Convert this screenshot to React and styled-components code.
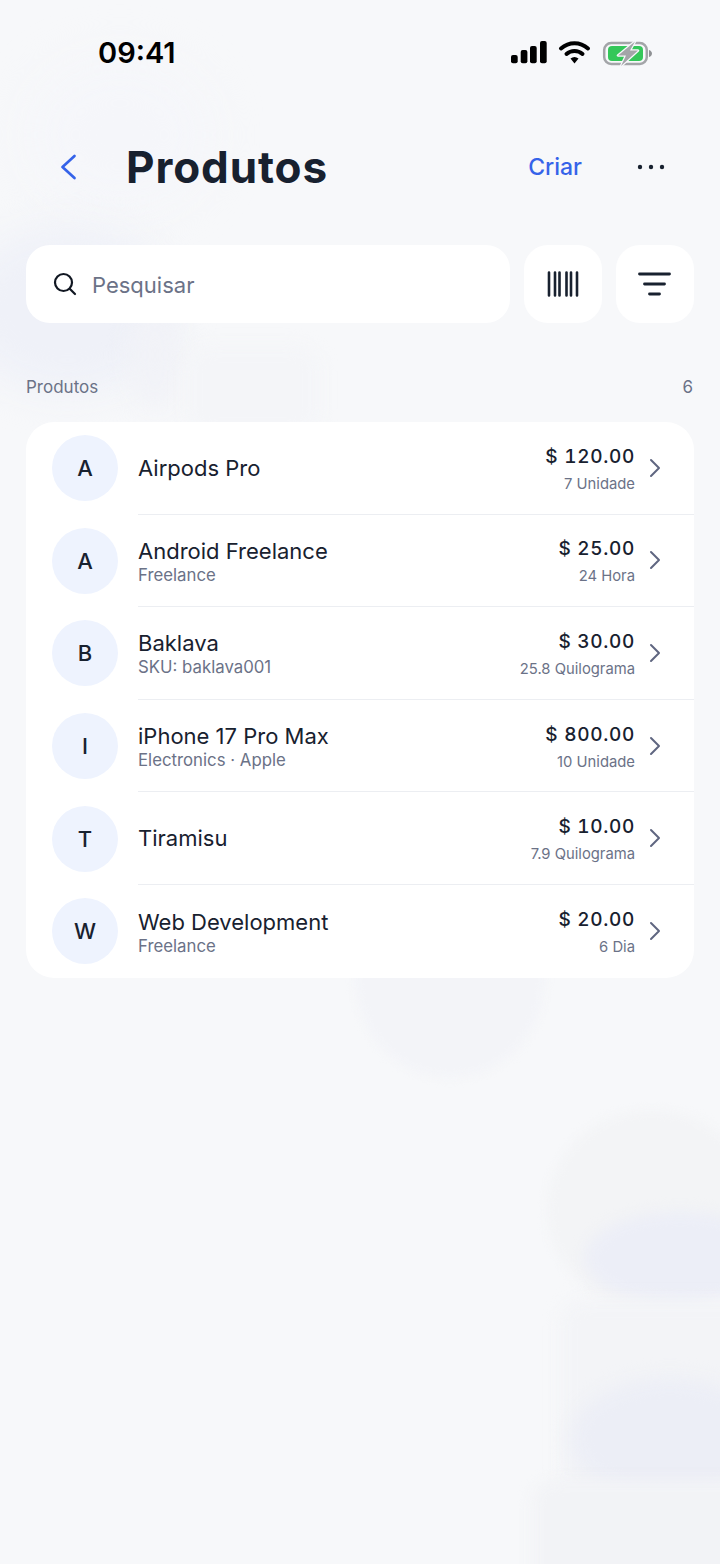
import React from 'react';
import styled, { createGlobalStyle } from 'styled-components';

const GlobalStyle = createGlobalStyle`
  html, body {
    margin: 0;
    padding: 0;
    background: #f7f8fa;
    font-family: Inter, "Noto Sans", sans-serif;
  }
`;

const Screen = styled.div`
  position: relative;
  width: 720px;
  height: 1564px;
  overflow: hidden;
  background: #f7f8fa;
`;

const Blob = styled.div`
  position: absolute;
  left: ${({ x }) => x}px;
  top: ${({ y }) => y}px;
  width: ${({ w }) => w}px;
  height: ${({ h }) => h}px;
  border-radius: ${({ square }) => (square ? '24px' : '50%')};
  background: ${({ color }) => color};
  filter: blur(${({ blur }) => blur}px);
`;

const Content = styled.div`
  position: relative;
  display: flex;
  flex-direction: column;
`;

const StatusBar = styled.div`
  height: 104px;
  padding: 0 66px 0 98px;
  box-sizing: border-box;
  display: flex;
  justify-content: space-between;
  align-items: flex-start;
`;

const Time = styled.div`
  margin-top: 35px;
  font-size: 29px;
  line-height: 36px;
  font-weight: 600;
  color: #000;
`;

const StatusIcons = styled.svg`
  margin-top: 38px;
`;

const Header = styled.div`
  height: 126px;
  padding: 0 55px 0 59px;
  display: flex;
  align-items: center;
`;

const BackButton = styled.svg`
  flex: none;
  margin-right: 49px;
`;

const Title = styled.h1`
  flex: 1;
  margin: 0;
  font-size: 44px;
  line-height: 50px;
  font-weight: 700;
  letter-spacing: 0.9px;
  color: #18212f;
`;

const CreateLink = styled.span`
  margin-right: 55px;
  font-size: 23px;
  font-weight: 500;
  color: #3563e9;
`;

const SearchRow = styled.div`
  margin-top: 15px;
  padding: 0 26px;
  display: flex;
  gap: 13.5px;
`;

const SearchBox = styled.div`
  flex: 1;
  height: 78px;
  padding-left: 27px;
  display: flex;
  align-items: center;
  gap: 15px;
  background: #fff;
  border-radius: 24px;
`;

const SearchText = styled.span`
  padding-top: 2px;
  font-size: 22px;
  color: #6b7287;
`;

const IconButton = styled.div`
  width: 78.5px;
  height: 78px;
  display: flex;
  align-items: center;
  justify-content: center;
  background: #fff;
  border-radius: 24px;
`;

const SectionRow = styled.div`
  margin-top: 53px;
  padding: 0 27px 0 26px;
  display: flex;
  justify-content: space-between;
  align-items: center;
  height: 22px;
  font-size: 17px;
  color: #6b7287;
`;

const ListCard = styled.div`
  margin: 24px 26px 0;
  background: #fff;
  border-radius: 28px;
  overflow: hidden;
`;

const Row = styled.div`
  height: 92.6px;
  padding-left: 26px;
  display: flex;
  align-items: center;
`;

const Avatar = styled.div`
  flex: none;
  width: 66px;
  height: 66px;
  margin-right: 20px;
  border-radius: 50%;
  display: flex;
  align-items: center;
  justify-content: center;
  background: #eef3fe;
  font-size: 22px;
  font-weight: 500;
  color: #18212f;
`;

const RowBody = styled.div`
  flex: 1;
  align-self: stretch;
  padding-right: 33px;
  display: flex;
  align-items: center;
  border-bottom: ${({ last }) => (last ? 'none' : '1.5px solid #eceef2')};
`;

const Info = styled.div`
  flex: 1;
`;

const Name = styled.div`
  font-size: 22px;
  line-height: 26px;
  color: #18212f;
`;

const Sub = styled.div`
  margin: 1px 0 -2px;
  font-size: 16.8px;
  line-height: 20px;
  color: #6b7287;
`;

const PriceCol = styled.div`
  margin-right: 14px;
  padding-top: 2px;
  text-align: right;
`;

const Price = styled.div`
  font-size: 19px;
  line-height: 26px;
  font-weight: 500;
  font-variant-numeric: tabular-nums;
  letter-spacing: 0.7px;
  color: #18212f;
`;

const Qty = styled.div`
  margin-top: 4px;
  font-size: 14.8px;
  line-height: 20px;
  color: #6b7287;
`;

const products = [
  { letter: 'A', name: 'Airpods Pro', price: '$ 120.00', qty: '7 Unidade' },
  { letter: 'A', name: 'Android Freelance', sub: 'Freelance', price: '$ 25.00', qty: '24 Hora' },
  { letter: 'B', name: 'Baklava', sub: 'SKU: baklava001', price: '$ 30.00', qty: '25.8 Quilograma' },
  { letter: 'I', name: 'iPhone 17 Pro Max', sub: 'Electronics · Apple', price: '$ 800.00', qty: '10 Unidade' },
  { letter: 'T', name: 'Tiramisu', price: '$ 10.00', qty: '7.9 Quilograma' },
  { letter: 'W', name: 'Web Development', sub: 'Freelance', price: '$ 20.00', qty: '6 Dia' },
];

// soft background shapes behind the page
const blobs = [
  { x: 30, y: 60, w: 180, h: 150, blur: 24, color: '#f5f6fa' },
  { x: -40, y: 225, w: 215, h: 170, blur: 18, color: '#eff1f8' },
  { x: 130, y: 300, w: 50, h: 110, blur: 12, color: '#f1f2f7' },
  { x: 185, y: 345, w: 135, h: 90, blur: 8, square: true, color: '#f4f5f8' },
  { x: 355, y: 880, w: 190, h: 198, blur: 4, color: '#f3f4f8' },
  { x: 547, y: 1110, w: 210, h: 200, blur: 5, color: '#f3f4f6' },
  { x: 585, y: 1212, w: 190, h: 92, blur: 7, color: '#eceef7' },
  { x: 560, y: 1300, w: 200, h: 200, blur: 8, square: true, color: '#f3f4f7' },
  { x: 570, y: 1378, w: 200, h: 122, blur: 9, color: '#eceef6' },
  { x: 532, y: 1480, w: 230, h: 120, blur: 7, square: true, color: '#f2f3f6' },
];

const Chevron = () => (
  <svg width="12" height="20" viewBox="0 0 12 20" fill="none">
    <path d="M2 2l8 8-8 8" stroke="#5f6680" strokeWidth="2" strokeLinecap="round" strokeLinejoin="round" />
  </svg>
);

export default function App() {
  return (
    <Screen>
      <GlobalStyle />
      {blobs.map((b, i) => (
        <Blob key={i} {...b} />
      ))}
      <Content>
        <StatusBar>
          <Time>09:41</Time>
          <StatusIcons width="144" height="28" viewBox="0 0 144 28">
            <rect x="1" y="17" width="6.700" height="8.300" rx="2" fill="#000" />
            <rect x="10.700" y="12" width="6.700" height="13.300" rx="2" fill="#000" />
            <rect x="20" y="8" width="6.700" height="17.300" rx="2" fill="#000" />
            <rect x="30" y="3" width="6.700" height="22.300" rx="2" fill="#000" />
            <path d="M51 10.500C59 3.500 70 3.500 78 10.500" stroke="#000" strokeWidth="4" fill="none" strokeLinecap="round" />
            <path d="M56.500 16C61 12 68 12 72.500 16" stroke="#000" strokeWidth="4" fill="none" strokeLinecap="round" />
            <path d="M60.500 20.500L64.500 25.500L68.500 20.500C66 18.500 63 18.500 60.500 20.500z" fill="#000" />
            <rect x="94.200" y="5" width="42.600" height="21" rx="7" fill="none" stroke="#a3a5a8" strokeWidth="2.500" />
            <rect x="98" y="8" width="35" height="15" rx="4" fill="#34c759" />
            <path d="M139 12v7c1.800-.5 3-2 3-3.500s-1.200-3-3-3.500z" fill="#8f9194" />
            <path d="M125 3.500L108 17.500H116L111 28L128 12.500H120z" fill="#a3a5a8" stroke="#f7f8fa" strokeWidth="2.500" strokeLinejoin="round" paintOrder="stroke" />
          </StatusIcons>
        </StatusBar>

        <Header>
          <BackButton width="18" height="28" viewBox="0 0 18 28" fill="none">
            <path d="M15.500 3L3.500 14l12 11" stroke="#3563e9" strokeWidth="2.700" strokeLinecap="round" strokeLinejoin="round" />
          </BackButton>
          <Title>Produtos</Title>
          <CreateLink>Criar</CreateLink>
          <svg width="28" height="6" viewBox="0 0 28 6">
            <circle cx="3" cy="3" r="2.200" fill="#18212f" />
            <circle cx="14" cy="3" r="2.200" fill="#18212f" />
            <circle cx="25" cy="3" r="2.200" fill="#18212f" />
          </svg>
        </Header>

        <SearchRow>
          <SearchBox>
            <svg width="24" height="24" viewBox="0 0 24 24" fill="none">
              <circle cx="10.500" cy="10.500" r="8.500" stroke="#111722" strokeWidth="2.200" />
              <path d="M17 17l5 5" stroke="#111722" strokeWidth="2.200" strokeLinecap="round" />
            </svg>
            <SearchText>Pesquisar</SearchText>
          </SearchBox>
          <IconButton>
            <svg width="32" height="26" viewBox="0 0 32 26" fill="none" stroke="#18212f" strokeWidth="2.600" strokeLinecap="round">
              <path d="M2 1.500v23M8 1.500v23M12.500 1.500v23M19.500 1.500v23M24 1.500v23M30 1.500v23" />
            </svg>
          </IconButton>
          <IconButton>
            <svg width="33" height="24" viewBox="0 0 33 24" fill="none" stroke="#18212f" strokeWidth="2.800" strokeLinecap="round">
              <path d="M1.500 2h30M6.500 12h20M11.500 22h10" />
            </svg>
          </IconButton>
        </SearchRow>

        <SectionRow>
          <span>Produtos</span>
          <span>6</span>
        </SectionRow>

        <ListCard>
          {products.map((p, i) => (
            <Row key={p.name}>
              <Avatar>{p.letter}</Avatar>
              <RowBody last={i === products.length - 1}>
                <Info>
                  <Name>{p.name}</Name>
                  {p.sub && <Sub>{p.sub}</Sub>}
                </Info>
                <PriceCol>
                  <Price>{p.price}</Price>
                  <Qty>{p.qty}</Qty>
                </PriceCol>
                <Chevron />
              </RowBody>
            </Row>
          ))}
        </ListCard>
      </Content>
    </Screen>
  );
}
